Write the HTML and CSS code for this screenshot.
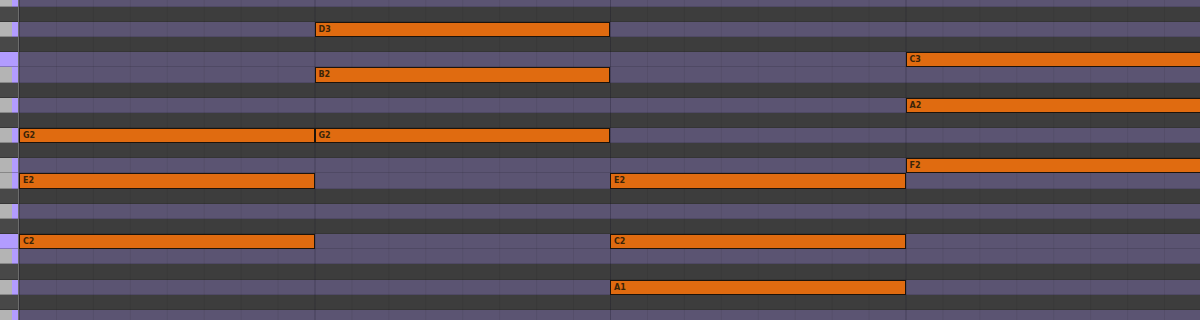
FILE: index.html
```html
<!DOCTYPE html>
<html lang="en">
<head>
  <meta charset="UTF-8">
  <title>Piano Roll</title>
  <link rel="stylesheet" href="styles.css">
</head>
<body>

  <div class="roll">
    <div class="rows">
      <div class="row white"><div class="key"></div><div class="lane"></div></div>
      <div class="row black"><div class="key"></div><div class="lane"></div></div>
      <div class="row white"><div class="key"></div><div class="lane"><div class="note b2">D3</div></div></div>
      <div class="row black"><div class="key"></div><div class="lane"></div></div>
      <div class="row white root"><div class="key"></div><div class="lane"><div class="note b4">C3</div></div></div>
      <div class="row white"><div class="key"></div><div class="lane"><div class="note b2">B2</div></div></div>
      <div class="row black"><div class="key"></div><div class="lane"></div></div>
      <div class="row white"><div class="key"></div><div class="lane"><div class="note b4">A2</div></div></div>
      <div class="row black"><div class="key"></div><div class="lane"></div></div>
      <div class="row white"><div class="key"></div><div class="lane"><div class="note b1">G2</div><div class="note b2">G2</div></div></div>
      <div class="row black"><div class="key"></div><div class="lane"></div></div>
      <div class="row white"><div class="key"></div><div class="lane"><div class="note b4">F2</div></div></div>
      <div class="row white"><div class="key"></div><div class="lane"><div class="note b1">E2</div><div class="note b3">E2</div></div></div>
      <div class="row black"><div class="key"></div><div class="lane"></div></div>
      <div class="row white"><div class="key"></div><div class="lane"></div></div>
      <div class="row black"><div class="key"></div><div class="lane"></div></div>
      <div class="row white root"><div class="key"></div><div class="lane"><div class="note b1">C2</div><div class="note b3">C2</div></div></div>
      <div class="row white"><div class="key"></div><div class="lane"></div></div>
      <div class="row black"><div class="key"></div><div class="lane"></div></div>
      <div class="row white"><div class="key"></div><div class="lane"><div class="note b3">A1</div></div></div>
      <div class="row black"><div class="key"></div><div class="lane"></div></div>
      <div class="row white"><div class="key"></div><div class="lane"></div></div>
    </div>
  </div>

</body>
</html>
```

FILE: styles.css
```css
:root {
  --lane-white: #5b5472;
  --lane-black: #3d3d3d;
  --key-white: #b4b4b4;
  --key-scale: #b29cff;
  --key-black: #484848;
  --note: #e06b10;
  --note-border: #1c130a;
  --note-text: #3a2408;
}
body {
  margin: 0;
  width: 1200px; height: 320px;
  overflow: hidden;
  background: var(--lane-black);
  font-family: "DejaVu Sans", sans-serif;
}
.roll {
  height: 320px;
  overflow: hidden;
}
.rows {
  margin-top: -8.4px;
}
.row {
  display: flex;
  height: 15.17px;
}
.key {
  width: 18px;
  flex: none;
  border-right: 1px solid #6c6c6c;
  box-shadow: inset 0 -1px 0 rgba(0, 0, 0, .25);
}
.white .key {
  background: linear-gradient(to right, var(--key-white) 12px, var(--key-scale) 12px);
}
.root .key {
  background: var(--key-scale);
}
.black .key {
  background: var(--key-black);
}
.lane {
  flex: none;
  width: 1182px;
  display: grid;
  grid-template-columns: repeat(4, 295.5px);
  box-shadow: inset 0 -1px 0 rgba(0, 0, 0, .12);
  background-image:
    linear-gradient(to right, rgba(20, 18, 40, .22) 1px, transparent 1px),
    linear-gradient(to right, rgba(0, 0, 0, .07) 1px, transparent 1px);
  background-size: 295.5px 100%, 36.94px 100%;
}
.white .lane { background-color: var(--lane-white); }
.black .lane { background-color: var(--lane-black); }
.note {
  box-sizing: border-box;
  height: 100%;
  background: var(--note);
  border: 1px solid var(--note-border);
  color: var(--note-text);
  font-size: 8px;
  font-weight: bold;
  line-height: 13px;
  padding-left: 3px;
}
.b1 { grid-column: 1; }
.b2 { grid-column: 2; }
.b3 { grid-column: 3; }
.b4 { grid-column: 4; }
```
